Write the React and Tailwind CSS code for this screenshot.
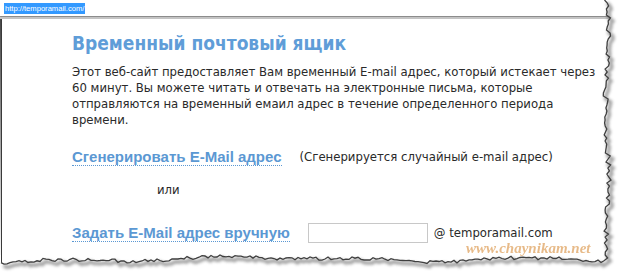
import { useMemo } from 'react';

// простой генератор для рваного края
function makeRand(seed) {
  let s = seed;
  return () => {
    s = (s * 16807) % 2147483647;
    return (s - 1) / 2147483646;
  };
}

function TornEdge() {
  const edge = useMemo(() => {
    const r = makeRand(42);
    const pts = [];
    for (let y = 0; y <= 258; y += 3) {
      const x = 607 + Math.sin(y / 23) * 1.5 + (r() - 0.5) * 5;
      pts.push([x, y]);
    }
    const bottom = (x) =>
      259 + Math.sin(x / 55) * 1.8 + Math.cos(x / 23) * 1.2 + (x < 40 ? (40 - x) / 12 : 0) + (x > 560 ? (x - 560) / 14 : 0);
    for (let x = 604; x >= 0; x -= 3) {
      pts.push([x, bottom(x) + (r() - 0.5) * 3.5]);
    }
    return pts;
  }, []);

  const line = edge.map(([x, y], i) => `${i ? 'L' : 'M'}${x.toFixed(1)} ${y.toFixed(1)}`).join(' ');
  const shape = `M0 0 L${edge[0][0].toFixed(1)} 0 ${line.replace('M', 'L')} L0 0 Z`;

  return (
    <svg className="absolute inset-0 pointer-events-none" width="620" height="273" viewBox="0 0 620 273">
      <defs>
        <filter id="sh" x="-10%" y="-10%" width="120%" height="120%">
          <feGaussianBlur stdDeviation="1.6" />
        </filter>
      </defs>
      <path d={`M0 0 H620 V273 H0 Z ${shape}`} fill="#ffffff" fillRule="evenodd" />
      <path d={line} transform="translate(2.5 3)" fill="none" stroke="#555" strokeWidth="3.5" opacity="0.55" filter="url(#sh)" />
      <path d={line} fill="none" stroke="#3f3f3f" strokeWidth="1.3" />
    </svg>
  );
}

export default function App() {
  return (
    <div className="relative w-[620px] h-[273px] bg-white overflow-hidden font-['Liberation_Sans',sans-serif]">
      {/* адресная строка */}
      <div className="h-[16px] flex items-center pl-[4px]">
        <span className="bg-[#3399ff] text-white text-[7.6px] leading-[11px] px-[1px]">http://temporamail.com/</span>
      </div>
      <div className="h-[3px] bg-[#c4c4c4] border-t border-[#8c8c8c]" />

      <div className="h-[254px] border-l-2 border-[#3a3a3a] pl-[70px] pt-[13px]">
        <h1 className="text-[19px] leading-[22px] font-bold text-[#5f9dd8] font-['DejaVu_Sans_Condensed','Liberation_Sans',sans-serif]">
          Временный почтовый ящик
        </h1>

        <p className="mt-[10px] text-[13px] leading-[16px] text-[#2a2a2a] whitespace-nowrap font-['DejaVu_Sans_Condensed','Liberation_Sans',sans-serif]">
          Этот веб-сайт предоставляет Вам временный E-mail адрес, который истекает через
          <br />
          60 минут. Вы можете читать и отвечать на электронные письма, которые
          <br />
          отправляются на временный емаил адрес в течение определенного периода
          <br />
          времени.
        </p>

        <div className="mt-[19px] flex items-center gap-[18px]">
          <span className="text-[15px] leading-[17px] font-bold text-[#5b98d3] border-b border-dotted border-[#5b98d3]">
            Сгенерировать E-Mail адрес
          </span>
          <span className="text-[13px] text-[#2a2a2a] font-['DejaVu_Sans_Condensed','Liberation_Sans',sans-serif]">
            (Сгенерируется случайный e-mail адрес)
          </span>
        </div>

        <div className="mt-[15px] ml-[85px] text-[13px] leading-[16px] text-[#2a2a2a] font-['DejaVu_Sans_Condensed','Liberation_Sans',sans-serif]">
          или
        </div>

        <div className="mt-[25px] flex items-center">
          <span className="text-[15px] leading-[17px] font-bold text-[#5b98d3] border-b border-dotted border-[#5b98d3]">
            Задать E-Mail адрес вручную
          </span>
          <input type="text" className="ml-[18px] w-[120px] h-[20px] border border-[#c8c8c8] bg-white outline-none" />
          <span className="ml-[6px] text-[13px] text-[#2a2a2a] font-['DejaVu_Sans_Condensed','Liberation_Sans',sans-serif]">
            @ temporamail.com
          </span>
        </div>
      </div>

      {/* водяной знак */}
      <div className="absolute left-[466px] top-[240px] text-[15px] leading-[16px] italic font-bold text-[#e2aa6c] opacity-80 font-['Liberation_Serif',serif]">
        www.chaynikam.net
      </div>

      <TornEdge />
    </div>
  );
}
